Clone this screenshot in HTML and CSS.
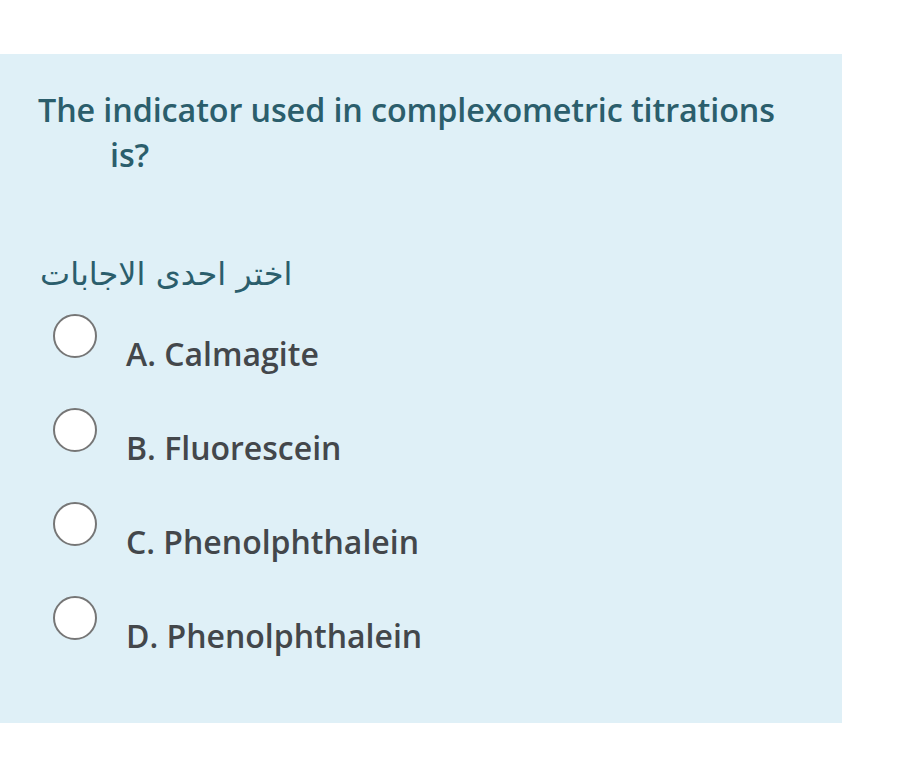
FILE: index.html
```html
<!DOCTYPE html>
<html lang="en">
<head>
<meta charset="utf-8">
<link rel="stylesheet" href="styles.css">
</head>
<body>
<div class="panel">
  <div class="question">The indicator used in complexometric titrations is?</div>
  <div class="hint" dir="rtl">اختر احدى الاجابات</div>
  <div class="options">
    <div class="option"><span class="radio"></span><span class="label">A. Calmagite</span></div>
    <div class="option"><span class="radio"></span><span class="label">B. Fluorescein</span></div>
    <div class="option"><span class="radio"></span><span class="label">C. Phenolphthalein</span></div>
    <div class="option"><span class="radio"></span><span class="label">D. Phenolphthalein</span></div>
  </div>
</div>
</body>
</html>
```
FILE: styles.css
```css
html, body {
  margin: 0;
  padding: 0;
  background: #ffffff;
}
body {
  padding-top: 54px;
}
.panel {
  width: 842px;
  height: 669px;
  box-sizing: border-box;
  background: #dff0f7;
  padding-top: 33px;
  font-family: "Open Sans", sans-serif;
}
.question {
  padding-left: 110px;
  text-indent: -72px;
  width: 690px;
  font-size: 32.3px;
  font-weight: 600;
  line-height: 45px;
  color: #2b5e6c;
  letter-spacing: -0.1px;
}
.hint {
  direction: rtl;
  text-align: left;
  margin-left: 40px;
  margin-top: 77px;
  font-family: "DejaVu Sans", sans-serif;
  font-size: 32px;
  color: #2b5e6c;
  line-height: 40px;
}
.options {
  display: flex;
  flex-direction: column;
  gap: 36px;
  padding-left: 53px;
  margin-top: 20px;
}
.option {
  display: flex;
  align-items: flex-start;
  gap: 29px;
}
.radio {
  width: 44px;
  height: 44px;
  box-sizing: border-box;
  border-radius: 50%;
  border: 2.5px solid #767676;
  background: #ffffff;
  flex: none;
}
.label {
  margin-top: 22px;
  font-size: 32px;
  font-weight: 600;
  line-height: 36px;
  color: #43474b;
}
```
